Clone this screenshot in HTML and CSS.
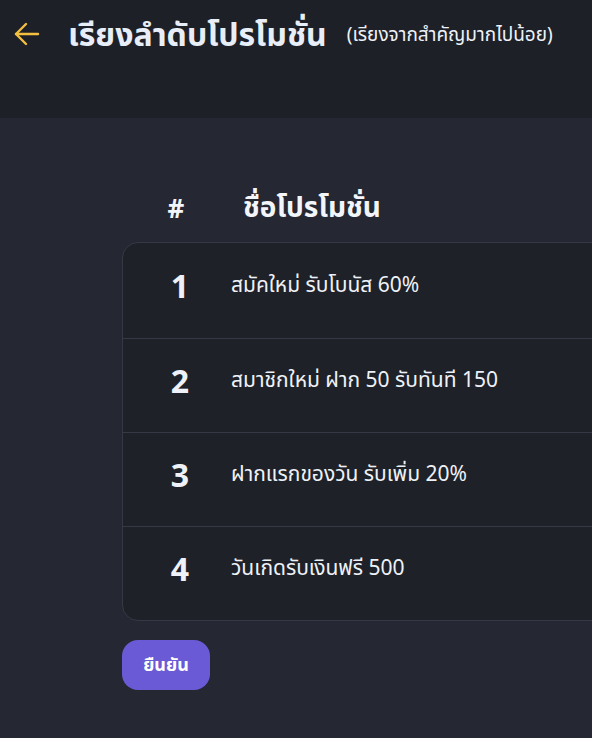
FILE: index.html
```html
<!DOCTYPE html>
<html lang="th">
<head>
<meta charset="utf-8">
<link rel="stylesheet" href="styles.css">
</head>
<body>
<header class="topbar">
  <svg class="back" width="28" height="28" viewBox="0 0 28 28" fill="none" stroke="#f2bf3f" stroke-width="2.4" stroke-linecap="round" stroke-linejoin="round">
    <path d="M25 14H3"/>
    <path d="M13 4L3 14L13 24"/>
  </svg>
  <h1 class="title">เรียงลำดับโปรโมชั่น</h1>
  <span class="subtitle">(เรียงจากสำคัญมากไปน้อย)</span>
</header>
<main class="content">
  <div class="thead">
    <div class="th-num">#</div>
    <div class="th-name">ชื่อโปรโมชั่น</div>
  </div>
  <div class="card">
    <div class="row"><div class="num">1</div><div class="name">สมัคใหม่ รับโบนัส 60%</div></div>
    <div class="row"><div class="num">2</div><div class="name">สมาชิกใหม่ ฝาก 50 รับทันที 150</div></div>
    <div class="row"><div class="num">3</div><div class="name">ฝากแรกของวัน รับเพิ่ม 20%</div></div>
    <div class="row"><div class="num">4</div><div class="name">วันเกิดรับเงินฟรี 500</div></div>
  </div>
  <button class="confirm">ยืนยัน</button>
</main>
</body>
</html>
```
FILE: styles.css
```css
html, body {
  margin: 0;
  padding: 0;
}
body {
  background: #252733;
  font-family: "Noto Sans", "Noto Sans Thai", sans-serif;
  color: #eef2f8;
  width: 592px;
  height: 738px;
  overflow: hidden;
}
.topbar {
  height: 118px;
  background: #1e2028;
  display: flex;
  align-items: flex-start;
  padding: 18px 0 0 13px;
  box-sizing: border-box;
}
.back {
  margin-top: 2px;
  flex: none;
}
.title {
  margin: 0 0 0 27px;
  font-size: 32px;
  font-weight: 700;
  line-height: 32px;
  color: #e8eef8;
  white-space: nowrap;
}
.subtitle {
  margin: 3px 0 0 20px;
  font-size: 19px;
  line-height: 26px;
  color: #eef2f8;
  white-space: nowrap;
}
.content {
  padding: 72px 0 0 122px;
}
.thead {
  display: flex;
  align-items: center;
  height: 36px;
  margin-bottom: 16px;
}
.th-num {
  width: 108px;
  text-align: center;
  font-size: 26px;
  font-weight: 700;
  color: #f2f5fa;
}
.th-name {
  padding-left: 13px;
  font-size: 28px;
  font-weight: 700;
  color: #f2f5fa;
}
.card {
  width: 600px;
  background: #1f2128;
  border: 1px solid #363945;
  border-radius: 16px;
}
.row {
  display: flex;
  align-items: center;
  height: 94px;
  padding-bottom: 10px;
  box-sizing: border-box;
  border-top: 1px solid #363945;
}
.row:first-child {
  border-top: none;
  height: 95px;
}
.num {
  width: 114px;
  text-align: center;
  font-size: 32px;
  font-weight: 700;
  color: #eef2f8;
}
.name {
  margin-left: -6px;
  font-size: 21px;
  color: #eef2f8;
}
.confirm {
  margin-top: 19px;
  width: 88px;
  height: 50px;
  border: none;
  border-radius: 16px;
  background: #6b5ad6;
  color: #ffffff;
  font-family: inherit;
  font-size: 18px;
  font-weight: 700;
  padding: 0;
}
```
